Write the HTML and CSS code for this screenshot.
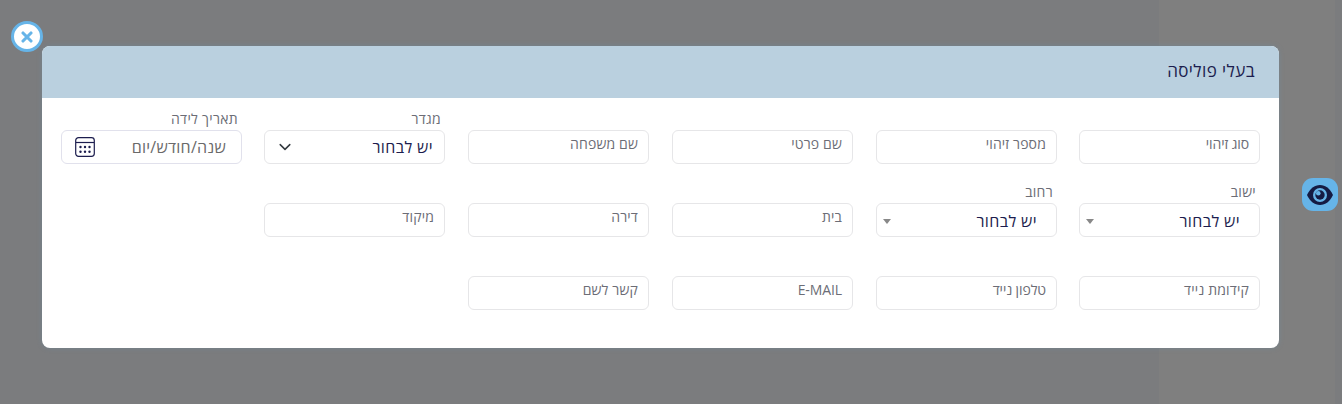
FILE: index.html
```
<!DOCTYPE html>
<html lang="he" dir="rtl">
<head>
<meta charset="utf-8">
<title>בעלי פוליסה</title>
<link rel="stylesheet" href="styles.css">
</head>
<body>
<main class="dialog">
  <header class="dialog-header"><h1 class="title">בעלי פוליסה</h1></header>
  <form class="fields">
    <div class="field"><div class="box"><span class="hint tight">סוג זיהוי</span></div></div>
    <div class="field"><div class="box"><span class="hint">מספר זיהוי</span></div></div>
    <div class="field"><div class="box"><span class="hint">שם פרטי</span></div></div>
    <div class="field"><div class="box"><span class="hint">שם משפחה</span></div></div>
    <div class="field"><span class="label">מגדר</span>
      <div class="box select gender"><span class="value">יש לבחור</span>
        <svg class="chevron" width="12" height="8" viewBox="0 0 12 8"><path d="M1.2 1.600 6 6.400l4.800-4.800" fill="none" stroke="#343a40" stroke-width="1.5" stroke-linecap="round" stroke-linejoin="round"/></svg></div></div>
    <div class="field"><span class="label">תאריך לידה</span>
      <div class="box select date"><span class="value placeholder">שנה/חודש/יום</span>
        <svg class="calendar" width="20" height="20" viewBox="0 0 20 20"><rect x=".7" y=".7" width="18.6" height="18.6" rx="2.8" fill="none" stroke="#1c1d4e" stroke-width="1.2"/><path d="M1 5.5h18" stroke="#1c1d4e" stroke-width="1.2"/><g fill="#1c1d4e"><circle cx="5.5" cy="10" r="1.2"/><circle cx="10" cy="10" r="1.2"/><circle cx="14.5" cy="10" r="1.2"/><circle cx="5.5" cy="14.7" r="1.2"/><circle cx="10" cy="14.7" r="1.2"/><circle cx="14.5" cy="14.7" r="1.2"/></g></svg></div></div>
    <div class="field"><span class="label">ישוב</span>
      <div class="box select combo"><span class="value">יש לבחור</span><i class="arrow"></i></div></div>
    <div class="field"><span class="label">רחוב</span>
      <div class="box select combo"><span class="value">יש לבחור</span><i class="arrow"></i></div></div>
    <div class="field"><div class="box"><span class="hint">בית</span></div></div>
    <div class="field"><div class="box"><span class="hint">דירה</span></div></div>
    <div class="field"><div class="box"><span class="hint">מיקוד</span></div></div>
    <div class="field row-start"><div class="box"><span class="hint">קידומת נייד</span></div></div>
    <div class="field"><div class="box"><span class="hint tight">טלפון נייד</span></div></div>
    <div class="field"><div class="box"><span class="hint tight">E-MAIL</span></div></div>
    <div class="field"><div class="box"><span class="hint">קשר לשם</span></div></div>
  </form>
</main>
<button class="close" type="button" aria-label="סגירה"><svg width="12" height="12" viewBox="0 0 12 12"><path d="m2 2 8 8m0-8-8 8" stroke="#66b4e8" stroke-width="3.1" stroke-linecap="round"/></svg></button>
<button class="view" type="button" aria-label="תצוגה"><svg width="26" height="20" viewBox="0 0 26 20"><path d="M0 10C3 3.600 7.500 0 13 0s10 3.600 13 10c-3 6.400-7.500 10-13 10S3 16.400 0 10Z" fill="#151b43"/><circle cx="13" cy="10" r="7" fill="#66b4e8"/><circle cx="13" cy="10" r="4.700" fill="#151b43"/><circle cx="11.300" cy="8.200" r="2.300" fill="#66b4e8"/></svg></button>
</body>
</html>
```
FILE: styles.css
```
* { box-sizing: border-box; }
body {
  margin: 0;
  height: 404px;
  overflow: hidden;
  padding: 46px 63px 0 42px;
  background: linear-gradient(to right, #7b7c7e 1159px, #7f7f7f 1159px, #7f7f7f 1335px, #7b7c7e 1335px);
  font-family: "Open Sans", "Noto Sans", "DejaVu Sans", sans-serif;
}
.dialog {
  height: 302px;
  border-radius: 8px;
  background: #fff;
  box-shadow: 0 0 5px rgba(102, 145, 175, .4);
}
.dialog-header {
  height: 52px;
  padding: 12px 24px 0;
  border-radius: 8px 8px 0 0;
  background: #bad0df;
}
.title {
  margin: 0;
  font-size: 17px;
  line-height: 26px;
  font-weight: 400;
  letter-spacing: .42px;
  color: #1c1d4e;
}
.fields {
  display: grid;
  grid-template-columns: 203px 204px 204px 204px 203px 181px;
  grid-auto-rows: 73px;
  padding: 10px 19px 0;
}
.field {
  display: flex;
  flex-direction: column;
  width: 181px;
  height: 56px;
}
.row-start { grid-column-start: 1; }
.label {
  height: 22px;
  padding-right: 4px;
  font-size: 14px;
  line-height: 22px;
  letter-spacing: .3px;
  color: #6c6d76;
}
.box {
  height: 34px;
  margin-top: auto;
  padding: 0 10px;
  border: 1px solid #e6e6e8;
  border-radius: 6px;
  background: #fff;
}
.hint {
  display: block;
  font-size: 14px;
  font-weight: 500;
  line-height: 26px;
  letter-spacing: .15px;
  color: #6c6d76;
}
.tight { letter-spacing: -.1px; }
.select {
  display: flex;
  align-items: center;
  justify-content: space-between;
}
.value {
  font-size: 16px;
  line-height: 30px;
  letter-spacing: .38px;
  color: #1c1d4e;
}
.placeholder { letter-spacing: .25px; color: #6a6a6a; }
.gender { padding: 0 11px 0 14px; }
.date { padding: 0 15px 0 13px; border-color: #e1e1ec; }
.combo { padding: 2px 19px 0 6px; }
.arrow {
  border: 4px solid transparent;
  border-top: 5px solid #888;
  border-bottom: 0;
}
.close, .view {
  position: absolute;
  display: grid;
  place-items: center;
  padding: 0;
  border: 0;
}
.close {
  left: 11px;
  top: 21px;
  width: 32px;
  height: 31px;
  border: 3px solid #66b4e8;
  border-radius: 50%;
  background: #fff;
}
.view {
  left: 1302px;
  top: 178px;
  width: 36px;
  height: 33px;
  border-radius: 11px;
  background: #66b4e8;
}
```
